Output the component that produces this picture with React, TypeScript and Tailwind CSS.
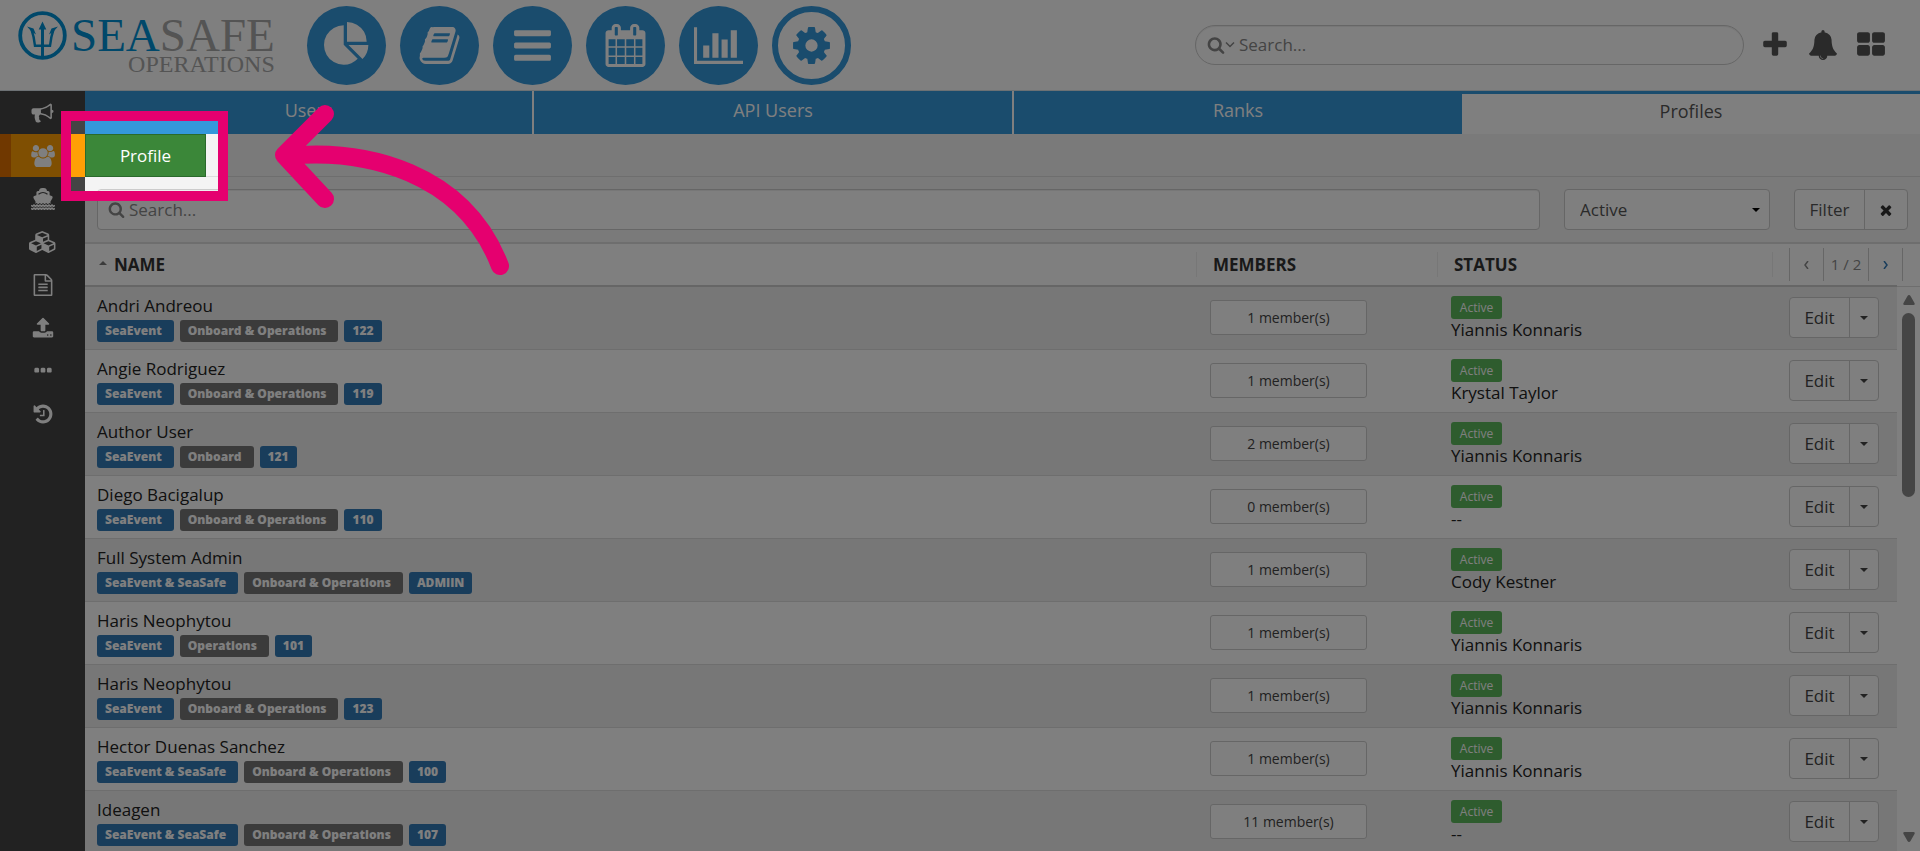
import React from "react";

const rows = [
  ["Andri Andreou", "SeaEvent", "Onboard & Operations", "122", "1", "Yiannis Konnaris"],
  ["Angie Rodriguez", "SeaEvent", "Onboard & Operations", "119", "1", "Krystal Taylor"],
  ["Author User", "SeaEvent", "Onboard", "121", "2", "Yiannis Konnaris"],
  ["Diego Bacigalup", "SeaEvent", "Onboard & Operations", "110", "0", "--"],
  ["Full System Admin", "SeaEvent & SeaSafe", "Onboard & Operations", "ADMIIN", "1", "Cody Kestner"],
  ["Haris Neophytou", "SeaEvent", "Operations", "101", "1", "Yiannis Konnaris"],
  ["Haris Neophytou", "SeaEvent", "Onboard & Operations", "123", "1", "Yiannis Konnaris"],
  ["Hector Duenas Sanchez", "SeaEvent & SeaSafe", "Onboard & Operations", "100", "1", "Yiannis Konnaris"],
  ["Ideagen", "SeaEvent & SeaSafe", "Onboard & Operations", "107", "11", "--"],
];

const icons = {
  bullhorn:
    "M1664 640q53 0 90.5 37.5t37.5 90.5-37.5 90.5-90.5 37.5v384q0 52-38 90t-90 38q-417-347-812-380-58 19-91 66t-31 100.5 40 92.5q-20 33-23 65.5t6 58 33.5 55 48 50 61.5 50.5q-29 58-111.5 83t-168.5 11.5-132-55.5q-7-23-29.5-87.5t-32-94.5-23-89-15-101 3.5-98.5 22-110.5h-122q-66 0-113-47t-47-113v-192q0-66 47-113t113-47h480q435 0 896-384 52 0 90 38t38 90v384zm-128 604v-954q-394 302-768 343v270q377 42 768 341z",
  users:
    "M593 896q-162 5-265 128h-134q-82 0-138-40.5t-56-118.5q0-353 124-353 6 0 43.5 21t97.5 42.5 119 21.5q67 0 133-23-5 37-5 66 0 159 93 286zm1071 637q0 120-73 189.5t-194 69.5h-874q-121 0-194-69.5t-73-189.5q0-53 3.5-103.5t14-109 26.5-108.5 43-97.5 62-81 85.5-53.5 111.5-20q10 0 43 21.5t73 48 107 48 135 21.5 135-21.5 107-48 73-48 43-21.5q61 0 111.5 20t85.5 53.5 62 81 43 97.5 26.5 108.5 14 109 3.5 103.5zm-1024-1277q0 106-75 181t-181 75-181-75-75-181 75-181 181-75 181 75 75 181zm704 384q0 159-112.5 271.5t-271.5 112.5-271.5-112.5-112.5-271.5 112.5-271.5 271.5-112.5 271.5 112.5 112.5 271.5zm576 225q0 78-56 118.5t-138 40.5h-134q-103-123-265-128 93-127 93-286 0-29-5-66 66 23 133 23 59 0 119-21.5t97.5-42.5 43.5-21q124 0 124 353zm-128-609q0 106-75 181t-181 75-181-75-75-181 75-181 181-75 181 75 75 181z",
  cubes:
    "M640 1632l384-192v-314l-384 164v342zm-64-454l404-173-404-173-404 173zm1088 454l384-192v-314l-384 164v342zm-64-454l404-173-404-173-404 173zm-448-293l384-165v-266l-384 164v267zm-64-379l441-189-441-189-441 189zm1088 518v416q0 36-19 67t-52 47l-448 224q-25 14-57 14t-57-14l-448-224q-4-2-7-4-2 2-7 4l-448 224q-25 14-57 14t-57-14l-448-224q-33-16-52-47t-19-67v-416q0-38 21.5-70t56.5-48l434-186v-400q0-38 21.5-70t56.5-48l448-192q23-10 50-10t50 10l448 192q35 16 56.5 48t21.5 70v400l434 186q36 16 57 48t21 70z",
  file:
    "M1596 380q28 28 48 76t20 88v1152q0 40-28 68t-68 28h-1344q-40 0-68-28t-28-68v-1600q0-40 28-68t68-28h896q40 0 88 20t76 48zm-444-244v376h376q-10-29-22-41l-313-313q-12-12-41-22zm384 1528v-1024h-416q-40 0-68-28t-28-68v-416h-768v1536h1280zm-1024-864q0-14 9-23t23-9h704q14 0 23 9t9 23v64q0 14-9 23t-23 9h-704q-14 0-23-9t-9-23v-64zm736 224q14 0 23 9t9 23v64q0 14-9 23t-23 9h-704q-14 0-23-9t-9-23v-64q0-14 9-23t23-9h704zm0 256q14 0 23 9t9 23v64q0 14-9 23t-23 9h-704q-14 0-23-9t-9-23v-64q0-14 9-23t23-9h704z",
  upload:
    "M1344 1472q0-26-19-45t-45-19-45 19-19 45 19 45 45 19 45-19 19-45zm256 0q0-26-19-45t-45-19-45 19-19 45 19 45 45 19 45-19 19-45zm128-224v320q0 40-28 68t-68 28h-1472q-40 0-68-28t-28-68v-320q0-40 28-68t68-28h427q21 56 70.5 92t110.5 36h256q61 0 110.5-36t70.5-92h427q40 0 68 28t28 68zm-325-648q-17 40-59 40h-256v448q0 26-19 45t-45 19h-256q-26 0-45-19t-19-45v-448h-256q-42 0-59-40-17-39 14-69l448-448q18-19 45-19t45 19l448 448q31 30 14 69z",
  ellipsis:
    "M576 736v192q0 40-28 68t-68 28h-192q-40 0-68-28t-28-68v-192q0-40 28-68t68-28h192q40 0 68 28t28 68zm512 0v192q0 40-28 68t-68 28h-192q-40 0-68-28t-28-68v-192q0-40 28-68t68-28h192q40 0 68 28t28 68zm512 0v192q0 40-28 68t-68 28h-192q-40 0-68-28t-28-68v-192q0-40 28-68t68-28h192q40 0 68 28t28 68z",
  history:
    "M1664 896q0 156-61 298t-164 245-245 164-298 61q-172 0-327-72.5t-264-204.5q-7-10-6.5-22.5t8.5-20.5l137-138q10-9 25-9 16 2 23 12 73 95 179 147t225 52q104 0 198.5-40.5t163.5-109.5 109.5-163.5 40.5-198.5-40.5-198.5-109.5-163.5-163.5-109.5-198.5-40.5q-98 0-188 35.5t-160 101.5l137 138q31 30 14 69-17 40-59 40h-448q-26 0-45-19t-19-45v-448q0-42 40-59 39-17 69 14l130 129q107-101 244.5-156.5t284.5-55.5q156 0 298 61t245 164 164 245 61 298zm-640-288v448q0 14-9 23t-23 9h-320q-14 0-23-9t-9-23v-64q0-14 9-23t23-9h224v-352q0-14 9-23t23-9h64q14 0 23 9t9 23z",
  search:
    "M1216 832q0-185-131.5-316.5t-316.5-131.5-316.5 131.5-131.5 316.5 131.5 316.5 316.5 131.5 316.5-131.5 131.5-316.5zm512 832q0 52-38 90t-90 38q-54 0-90-38l-343-342q-179 124-399 124-143 0-273.5-55.5t-225-150-150-225-55.5-273.5 55.5-273.5 150-225 225-150 273.5-55.5 273.5 55.5 225 150 150 225 55.5 273.5q0 220-124 399l343 343q37 37 37 90z",
  plus:
    "M1600 736v192q0 40-28 68t-68 28h-416v416q0 40-28 68t-68 28h-192q-40 0-68-28t-28-68v-416h-416q-40 0-68-28t-28-68v-192q0-40 28-68t68-28h416v-416q0-40 28-68t68-28h192q40 0 68 28t28 68v416h416q40 0 68 28t28 68z",
  bell:
    "M912 1696q0-16-16-16-59 0-101.5-42.5t-42.5-101.5q0-16-16-16t-16 16q0 73 51.5 124.5t124.5 51.5q16 0 16-16zm816-288q0 52-38 90t-90 38h-448q0 106-75 181t-181 75-181-75-75-181h-448q-52 0-90-38t-38-90q50-42 91-88t85-119.5 74.5-158.5 50-206 19.5-260q0-152 117-282.5t307-158.5q-8-19-8-39 0-40 28-68t68-28 68 28 28 68q0 20-8 39 190 28 307 158.5t117 282.5q0 139 19.5 260t50 206 74.5 158.5 85 119.5 91 88z",
  tiles:
    "M832 1024v384q0 52-38 90t-90 38h-512q-52 0-90-38t-38-90v-384q0-52 38-90t90-38h512q52 0 90 38t38 90zm0-768v384q0 52-38 90t-90 38h-512q-52 0-90-38t-38-90v-384q0-52 38-90t90-38h512q52 0 90 38t38 90zm896 768v384q0 52-38 90t-90 38h-512q-52 0-90-38t-38-90v-384q0-52 38-90t90-38h512q52 0 90 38t38 90zm0-768v384q0 52-38 90t-90 38h-512q-52 0-90-38t-38-90v-384q0-52 38-90t90-38h512q52 0 90 38t38 90z",
  cog:
    "M1152 896q0-106-75-181t-181-75-181 75-75 181 75 181 181 75 181-75 75-181zm512-109v222q0 12-8 23t-20 13l-185 28q-19 54-39 91 35 50 107 138 10 12 10 25t-9 23q-27 37-99 108t-94 71q-12 0-26-9l-138-108q-44 23-91 38-16 136-29 186-7 28-36 28h-222q-14 0-24.5-8.5t-11.5-21.5l-28-184q-49-16-90-37l-141 107q-10 9-25 9-14 0-25-11-126-114-165-168-7-10-7-23 0-12 8-23 15-21 51-66.5t54-70.5q-27-50-41-99l-183-27q-13-2-21-12.5t-8-23.5v-222q0-12 8-23t19-13l186-28q14-46 39-92-40-57-107-138-10-12-10-24 0-10 9-23 26-36 98.5-107.5t94.5-71.5q13 0 26 10l138 107q44-23 91-38 16-136 29-186 7-28 36-28h222q14 0 24.5 8.5t11.5 21.5l28 184q49 16 90 37l142-107q9-9 24-9 13 0 25 10 129 119 165 170 7 8 7 22 0 12-8 23-15 21-51 66.5t-54 70.5q26 50 41 98l183 28q13 2 21 12.5t8 23.5z",
  pie:
    "M768 890l546 546q-106 108-247.5 168t-298.5 60q-209 0-385.5-103t-279.5-279.5-103-385.5 103-385.5 279.5-279.5 385.5-103v762zm187 6h773q0 157-60 298.5t-168 247.5zm709-128h-768v-768q209 0 385.5 103t279.5 279.5 103 385.5z",
  book:
    "M1703 478q40 57 18 129l-275 906q-19 64-76.5 107.5t-122.5 43.5h-923q-77 0-148.5-53.5t-99.5-131.5q-24-67-2-127 0-4 3-27t4-37q1-8-3-21.5t-3-19.5q2-11 8-21t16.5-23.5 16.5-23.5q23-38 45-91.5t30-91.5q3-10 .5-30t-.5-28q3-11 17-28t17-23q21-36 42-92t25-90q1-9-2.5-32t.5-28q4-13 22-30.5t22-22.5q19-26 42.5-84.5t27.5-96.5q1-8-3-25.5t-2-26.5q2-8 9-18t18-23 17-21q8-12 16.5-30.5t15-35 16-36 19.5-32 26.5-23.5 36-11.5 47.5 5.5l-1 3q38-9 51-9h761q74 0 114 56t18 130l-274 906q-36 119-71.5 153.5t-128.5 34.5h-869q-27 0-38 15-11 16-1 43 24 70 144 70h923q29 0 56-15.5t35-41.5l300-987q7-22 5-57 38 15 59 43zm-1064 2q-4 13 2 22.5t20 9.5h608q13 0 25.5-9.5t16.5-22.5l21-64q4-13-2-22.5t-20-9.5h-608q-13 0-25.5 9.5t-16.5 22.5zm-83 256q-4 13 2 22.5t20 9.5h608q13 0 25.5-9.5t16.5-22.5l21-64q4-13-2-22.5t-20-9.5h-608q-13 0-25.5 9.5t-16.5 22.5z",
  bars:
    "M1664 1344v128q0 26-19 45t-45 19h-1408q-26 0-45-19t-19-45v-128q0-26 19-45t45-19h1408q26 0 45 19t19 45zm0-512v128q0 26-19 45t-45 19h-1408q-26 0-45-19t-19-45v-128q0-26 19-45t45-19h1408q26 0 45 19t19 45zm0-512v128q0 26-19 45t-45 19h-1408q-26 0-45-19t-19-45v-128q0-26 19-45t45-19h1408q26 0 45 19t19 45z",
  calendar:
    "M192 1664h288v-288h-288v288zm352 0h320v-288h-320v288zm-352-352h288v-320h-288v320zm352 0h320v-320h-320v320zm-352-384h288v-288h-288v288zm736 736h320v-288h-320v288zm-384-736h320v-288h-320v288zm768 736h288v-288h-288v288zm-384-352h320v-320h-320v320zm-352-864v-288q0-13-9.5-22.5t-22.5-9.5h-64q-13 0-22.5 9.5t-9.5 22.5v288q0 13 9.5 22.5t22.5 9.500h64q13 0 22.500-9.500t9.500-22.500zm736 864h288v-320h-288v320zm-384-384h320v-288h-320v288zm384 0h288v-288h-288v288zm32-480v-288q0-13-9.500-22.500t-22.500-9.500h-64q-13 0-22.500 9.500t-9.500 22.500v288q0 13 9.500 22.500t22.500 9.500h64q13 0 22.500-9.500t9.500-22.500zm384-64v1280q0 52-38 90t-90 38h-1408q-52 0-90-38t-38-90v-1280q0-52 38-90t90-38h128v-96q0-66 47-113t113-47h64q66 0 113 47t47 113v96h384v-96q0-66 47-113t113-47h64q66 0 113 47t47 113v96h128q52 0 90 38t38 90z",
  chart:
    "M640 896v512h-256v-512h256zm384-512v1024h-256v-1024h256zm1024 1152v128h-2048v-1536h128v1408h1920zm-640-896v768h-256v-768h256zm384-384v1152h-256v-1152h256z",
  times:
    "M1490 1322q0 40-28 68l-136 136q-28 28-68 28t-68-28l-294-294-294 294q-28 28-68 28t-68-28l-136-136q-28-28-28-68t28-68l294-294-294-294q-28-28-28-68t28-68l136-136q28-28 68-28t68 28l294 294 294-294q28-28 68-28t68 28l136 136q28 28 28 68t-28 68l-294 294 294 294q28 28 28 68z",
};

function Icon({ d, w = 1792, className }: { d: string; w?: number; className: string }) {
  return (
    <svg aria-hidden="true" viewBox={`0 0 ${w} 1792`} className={`shrink-0 fill-current ${className}`}>
      <path d={d} />
    </svg>
  );
}

function Caret() {
  return (
    <svg aria-hidden="true" viewBox="0 0 8 4" className="h-1 w-2 fill-current">
      <path d="M0 0h8L4 4z" />
    </svg>
  );
}

function Ship() {
  return (
    <svg aria-hidden="true" viewBox="0 0 24 22" className="h-[22px] w-6 fill-current">
      <path d="M8 3q.3-3 3.200-3h1.600q2.900 0 3.200 3h1q1.600 0 1.600 1.600v2.600l2.200.9q1.300.6.7 1.800L19.300 14l.7 1.800-1.500-.9-1.700 1.400-1.600-1.400-1.600 1.400-1.600-1.400-1.600 1.400-1.600-1.400-1.600 1.400-1.700-1.400-1.500.9.700-1.800-2.200-4.100q-.6-1.200.7-1.800l2.200-.9V4.600Q5.400 3 7 3z" />
      <path className="fill-none stroke-[#444]" strokeWidth="1.200" d="M7.500 6.300q4.500-3.600 9 0" />
      <path
        className="fill-none stroke-current"
        strokeWidth="1.500"
        d="M0 17.500l1.500.9 1.500-1.300 1.500 1.300L6 17.100l1.500 1.300L9 17.100l1.500 1.300 1.500-1.300 1.500 1.300 1.500-1.300 1.500 1.300 1.500-1.300 1.500 1.300 1.500-1.300 1.500 1.300 1.500-.9M0 20.500l1.500.9 1.500-1.300 1.500 1.300L6 20.100l1.500 1.300L9 20.100l1.500 1.300 1.500-1.300 1.500 1.300 1.500-1.300 1.500 1.300 1.500-1.300 1.500 1.300 1.500-1.300 1.500 1.300 1.500-.9"
      />
    </svg>
  );
}

function Logo() {
  return (
    <a href="#home" aria-label="SeaSafe Operations" className="flex gap-1">
      <svg aria-hidden="true" viewBox="0 0 50 50" className="h-[50px] w-[50px] shrink-0 fill-none stroke-[#0091d4]">
        <circle cx="25.500" cy="24.500" r="22.300" strokeWidth="3.800" />
        <path strokeWidth="3" d="M25.500 14v32" />
        <path strokeWidth="2.400" d="M14.500 18.500q2.500 7 3.500 16.300h15q1-9.300 3.500-16.300" />
        <path
          className="fill-[#0091d4] stroke-none"
          d="M25.500 10.500l3.800 8h-7.600zM10 15.500l6.500 2 2.500 6-4.500-3zM41 15.500l-6.500 2-2.500 6 4.500-3z"
        />
      </svg>
      <span className="flex flex-col items-end font-['Liberation_Serif',serif]">
        <span className="text-[47px] leading-[48px] text-[#a8a8a8]">
          <span className="text-[#0091d4]">SEA</span>SAFE
        </span>
        <span className="text-2xl leading-[10px] text-[#a8a8a8]">OPERATIONS</span>
      </span>
    </a>
  );
}

const nav = [
  { name: "Dashboard", d: icons.pie, w: 1792, size: "h-[46px] w-[46px]" },
  { name: "Library", d: icons.book, w: 1792, size: "h-[43px] w-[43px]" },
  { name: "Lists", d: icons.bars, w: 1792, size: "h-[43px] w-[43px]" },
  { name: "Calendar", d: icons.calendar, w: 1792, size: "h-[43px] w-[43px]" },
  { name: "Reports", d: icons.chart, w: 2048, size: "h-[43px] w-[49px]" },
];

const side = [
  { name: "Announcements", d: icons.bullhorn, w: 1792, size: "h-[22px] w-[23px]" },
  { name: "Users", d: icons.users, w: 1920, size: "h-[22px] w-6" },
  { name: "Vessels", d: "", w: 0, size: "" },
  { name: "Inventory", d: icons.cubes, w: 2304, size: "h-[22px] w-7" },
  { name: "Documents", d: icons.file, w: 1792, size: "h-[22px] w-[22px]" },
  { name: "Upload", d: icons.upload, w: 1792, size: "h-[22px] w-[22px]" },
  { name: "More", d: icons.ellipsis, w: 1792, size: "h-[22px] w-[22px]" },
  { name: "History", d: icons.history, w: 1792, size: "h-[22px] w-[22px]" },
];

function Header() {
  return (
    <header className="flex h-[91px] items-center border-b border-[#d9e2e8] bg-white pr-[34px]">
      <div className="flex w-[307px] shrink-0 self-start pl-[17px] pt-[11px]">
        <Logo />
      </div>
      <nav aria-label="Main" className="flex gap-[14px]">
        {nav.map((n) => (
          <a key={n.name} href="#main" aria-label={n.name} className="flex h-[79px] w-[79px] items-center justify-center rounded-full bg-[#3498db] text-white">
            <Icon d={n.d} w={n.w} className={n.size} />
          </a>
        ))}
        <a href="#settings" aria-label="Settings" className="flex h-[79px] w-[79px] items-center justify-center rounded-full border-[6px] border-[#3498db] text-[#3498db]">
          <Icon d={icons.cog} className="h-[43px] w-[43px]" />
        </a>
      </nav>
      <div className="ml-auto flex items-center">
        <label className="mr-4 flex h-10 w-[549px] items-center rounded-full border border-[#ccc] pl-[11px] text-[#888] shadow-[inset_0_1px_1px_rgba(0,0,0,0.075)]">
          <Icon d={icons.search} className="h-[18px] w-[18px]" />
          <svg aria-hidden="true" viewBox="0 0 10 6" className="mr-1 h-[6px] w-[10px] fill-none stroke-current">
            <path strokeWidth="1.500" d="M1 0.500l4 4 4-4" />
          </svg>
          <input aria-label="Search" placeholder="Search..." className="min-w-0 flex-1 text-[17px] outline-none placeholder:text-[#888]" />
        </label>
        <div className="flex items-center gap-[18px] text-[#555]">
          <button aria-label="Add"><Icon d={icons.plus} className="h-[30px] w-[30px]" /></button>
          <button aria-label="Notifications"><Icon d={icons.bell} className="h-[30px] w-[30px]" /></button>
          <button aria-label="Apps"><Icon d={icons.tiles} className="h-[30px] w-[30px]" /></button>
        </div>
      </div>
    </header>
  );
}

function Sidebar() {
  return (
    <nav aria-label="Sections" className="flex w-[85px] shrink-0 flex-col bg-[#444]">
      {side.map((s) => (
        <a
          key={s.name}
          href="#section"
          aria-label={s.name}
          className={`flex h-[43px] items-center justify-center text-white ${s.name === "Users" ? "border-l-[11px] border-[#e07000] bg-[#ff9f05] pr-[11px]" : ""}`}
        >
          {s.d ? <Icon d={s.d} w={s.w} className={s.size} /> : <Ship />}
        </a>
      ))}
    </nav>
  );
}

function Tabs() {
  return (
    <nav aria-label="Views" className="grid h-[43px] grid-cols-[449fr_480fr_448fr_458fr] text-center text-lg leading-[38px]">
      <a href="#users" className="border-r-2 border-white bg-[#3498db] leading-[38px] text-white">Users</a>
      <a href="#api" className="border-r-2 border-white bg-[#3498db] leading-[38px] text-white">API Users</a>
      <a href="#ranks" className="bg-[#3498db] leading-[38px] text-white">Ranks</a>
      <a href="#profiles" aria-current="page" className="border-t-[3px] border-[#3498db] bg-white leading-[34px] text-[#555]">Profiles</a>
    </nav>
  );
}

function Filters() {
  return (
    <form className="flex h-[67px] items-center gap-6 border-b-2 border-[#ddd] px-3" onSubmit={(e) => e.preventDefault()}>
      <label className="flex h-[41px] flex-1 items-center gap-1 rounded border border-[#ccc] bg-white pl-[10px] text-[#888] shadow-[inset_0_1px_1px_rgba(0,0,0,0.075)]">
        <Icon d={icons.search} className="h-[17px] w-[17px]" />
        <input aria-label="Search profiles" placeholder="Search..." className="min-w-0 flex-1 text-[17px] outline-none placeholder:text-[#888]" />
      </label>
      <div className="grid w-[206px] items-center">
        <select aria-label="Status" className="col-start-1 row-start-1 h-[41px] appearance-none rounded border border-[#ccc] bg-white px-[15px] text-[17px] text-[#555]">
          <option>Active</option>
        </select>
        <span className="pointer-events-none col-start-1 row-start-1 mr-[10px] justify-self-end text-black"><Caret /></span>
      </div>
      <div className="flex h-[41px] rounded border border-[#ccc] bg-white">
        <button className="w-[70px] border-r border-[#ccc] text-[17px] text-[#555]">Filter</button>
        <button aria-label="Clear filter" className="flex w-[42px] items-center justify-center text-[#333]"><Icon d={icons.times} className="h-4 w-4" /></button>
      </div>
    </form>
  );
}

function Pager() {
  return (
    <div className="flex h-[33px] w-[114px] border-x border-[#ccc] text-[15px] font-normal text-[#888]">
      <button aria-label="Previous page" className="flex flex-1 items-center justify-center">
        <svg aria-hidden="true" viewBox="0 0 5 8" className="h-2 w-[5px] fill-none stroke-current"><path strokeWidth="1.500" d="M4 0L1 4l3 4" /></svg>
      </button>
      <span className="w-[46px] border-x border-[#ccc] text-center leading-8">1 / 2</span>
      <button aria-label="Next page" className="flex flex-1 items-center justify-center text-[#337ab7]">
        <svg aria-hidden="true" viewBox="0 0 5 8" className="h-2 w-[5px] fill-none stroke-current"><path strokeWidth="1.500" d="M1 0l3 4-3 4" /></svg>
      </button>
    </div>
  );
}

function ScrollRail() {
  return (
    <div aria-hidden="true" className="flex w-[23px] shrink-0 flex-col">
      <div className="h-[43px] border-b border-[#ddd]" />
      <div className="flex flex-1 flex-col items-center pb-[9px] pt-2 text-[#8b8b8b]">
        <svg viewBox="0 0 12 10" className="h-[10px] w-3 fill-current"><path d="M6 0q1 0 1.500 1l4 7q.8 2-1 2h-9q-1.800 0-1-2l4-7Q5 0 6 0z" /></svg>
        <div className="mt-2 h-[184px] w-[13px] rounded-full bg-[#8b8b8b]" />
        <svg viewBox="0 0 12 10" className="mt-auto h-[10px] w-3 fill-current"><path d="M6 10q1 0 1.500-1l4-7q.8-2-1-2h-9q-1.800 0-1 2l4 7q.5 1 1.500 1z" /></svg>
      </div>
    </div>
  );
}

const nameTag = "rounded-[3px] pl-2 pr-3 text-xs leading-[22px] font-extrabold text-white";
const codeTag = "rounded-[3px] px-2 text-xs leading-[22px] font-extrabold text-white";

function ProfileTable() {
  return (
    <div className="flex min-h-0 flex-1 overflow-hidden bg-white">
      <div className="min-w-0 flex-1">
        <table className="w-full table-fixed text-left text-[17px] text-[#222]">
          <colgroup>
            <col />
            <col className="w-[241px]" />
            <col className="w-[336px]" />
            <col className="w-[124px]" />
          </colgroup>
          <thead className="bg-white">
            <tr className="h-[42px] border-b-2 border-[#ccc] text-[#333]">
              <th className="pl-[14px]">
                <span className="flex items-center gap-[7px]"><span className="rotate-180 pt-1 text-[#777]"><Caret /></span>NAME</span>
              </th>
              <th><span className="block border-l border-[#eee] pl-4">MEMBERS</span></th>
              <th><span className="block border-x border-[#eee] pl-4">STATUS</span></th>
              <th className="pl-4"><Pager /></th>
            </tr>
          </thead>
          <tbody>
            {rows.map(([name, product, area, code, members, by]) => (
              <tr key={code} className="h-[63px] border-b border-[#ddd] bg-white odd:bg-[#eee]">
                <td className="pl-3 align-top">
                  <div className="pt-1 leading-[29px]">{name}</div>
                  <div className="flex gap-[6px]">
                    <span className={`${nameTag} bg-[#337ab7]`}>{product}</span>
                    <span className={`${nameTag} bg-[#777]`}>{area}</span>
                    <span className={`${codeTag} bg-[#337ab7]`}>{code}</span>
                  </div>
                </td>
                <td className="pl-[14px]">
                  <button className="block h-[35px] w-[157px] rounded-[3px] border border-[#ccc] bg-white text-sm text-[#444]">{members} member(s)</button>
                </td>
                <td className="pl-[14px] align-top">
                  <div className="mt-[9px] w-[51px] rounded-[3px] bg-[#5cb85c] text-center text-xs leading-[23px] text-white">Active</div>
                  <div className="leading-[22px]">{by}</div>
                </td>
                <td className="pl-4">
                  <div className="flex h-[41px] w-[90px] rounded border border-[#ccc] bg-white text-[17px] text-[#444]">
                    <button className="flex-1 border-r border-[#ccc]">Edit</button>
                    <button aria-label="More actions" className="flex w-7 items-center justify-center"><Caret /></button>
                  </div>
                </td>
              </tr>
            ))}
          </tbody>
        </table>
      </div>
      <ScrollRail />
    </div>
  );
}

export default function App() {
  return (
    <div className="relative flex h-screen flex-col overflow-hidden bg-white font-['Open_Sans','Noto_Sans',sans-serif]">
      <Header />
      <div className="flex min-h-0 flex-1">
        <Sidebar />
        <main className="flex min-w-0 flex-1 flex-col bg-[#f4f4f4]">
          <Tabs />
          <div className="flex h-[43px] border-b border-[#ddd]">
            <button className="h-[43px] w-[121px] border border-[#2a6a2c] bg-[#3b8739] text-[17px] text-white">Profile</button>
          </div>
          <Filters />
          <ProfileTable />
        </main>
      </div>
      <div aria-hidden="true" className="pointer-events-none absolute left-[61px] top-[111px] h-[90px] w-[167px] border-10 border-[#e5006f] shadow-[0_0_0_2000px_rgba(0,0,0,0.5)]" />
      <svg aria-hidden="true" viewBox="0 0 236 172" className="pointer-events-none absolute left-[274px] top-[104px] h-[172px] w-[236px] fill-none stroke-[#e5006f]" strokeLinecap="round" strokeLinejoin="round" strokeWidth="18">
        <path d="M51 10L10 51l41 44M12 52C92 44 190 68 226 162" />
      </svg>
    </div>
  );
}
